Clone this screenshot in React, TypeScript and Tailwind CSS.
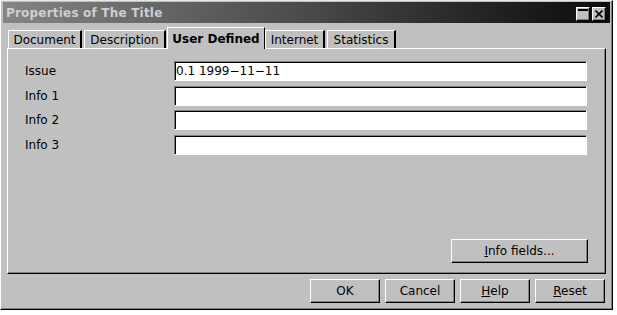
import React from "react";

const font = { fontFamily: '"DejaVu Sans", Verdana, sans-serif' };

const raised =
  "border border-t-white border-l-white border-r-black border-b-black shadow-[inset_-1px_-1px_0_#808080] bg-[#c0c0c0]";

function Tab({ label, w, active }: { label: string; w: number; active?: boolean }) {
  if (active) {
    return (
      <div
        className="relative z-10 -mb-px flex h-[22px] items-center justify-center border-t border-l border-r border-t-white border-l-white border-r-black bg-[#c0c0c0] text-[12px] font-bold text-black"
        style={{ width: w }}
      >
        {label}
      </div>
    );
  }
  return (
    <div
      className="flex h-[18px] items-center justify-center border-t border-l border-r-2 border-t-white border-l-white border-r-black bg-[#c0c0c0] text-[12px] text-black"
      style={{ width: w }}
    >
      {label}
    </div>
  );
}

function Field({ label, value }: { label: string; value?: string }) {
  return (
    <div className="flex h-[20px] items-center">
      <span className="w-[149px] text-[12px] text-black">{label}</span>
      <div className="flex h-[20px] w-[413px] items-center border border-t-[#808080] border-l-[#808080] border-r-white border-b-white bg-white pl-[1px] text-[12px] text-black shadow-[inset_1px_1px_0_#000]">
        {value}
      </div>
    </div>
  );
}

function Btn({ children, w = 70 }: { children: React.ReactNode; w?: number }) {
  return (
    <div
      className={`${raised} flex h-[24px] items-center justify-center text-[12px] text-black`}
      style={{ width: w }}
    >
      {children}
    </div>
  );
}

export default function App() {
  return (
    <div className="h-[315px] w-[617px] bg-white" style={font}>
      <div className="flex h-[310px] w-[613px] flex-col border border-t-[#e8e8e8] border-l-white border-r-black border-b-black bg-[#c0c0c0] shadow-[inset_-1px_-1px_0_#808080]">
        {/* title bar */}
        <div className="mx-[2px] mt-[1px] flex h-[21px] items-center justify-between bg-gradient-to-r from-[#858585] via-[#4a4a4a] to-[#0c0c0c] pl-[3px] pr-[4px]">
          <span className="text-[12px] font-bold tracking-[0.2px] text-[#cfcfcf]">Properties of The Title</span>
          <div className="mt-[3px] flex gap-[2px]">
            <div className={`${raised} flex h-[14px] w-[14px] items-start justify-start p-[1px]`}>
              <div className="h-[2px] w-[10px] bg-black" />
            </div>
            <div className={`${raised} flex h-[14px] w-[14px] items-center justify-center`}>
              <svg width="8" height="8" viewBox="0 0 8 8">
                <path d="M0.5 0.5L7.5 7.5M7.5 0.5L0.5 7.5" stroke="#000" strokeWidth="1.6" />
              </svg>
            </div>
          </div>
        </div>

        {/* tabs */}
        <div className="ml-[7px] mt-[4px] flex h-[21px] items-end gap-[2px]">
          <Tab label="Document" w={74} />
          <Tab label="Description" w={82} />
          <div className="-ml-[1px] -mr-[2px]">
            <Tab label="User Defined" w={98} active />
          </div>
          <Tab label="Internet" w={60} />
          <Tab label="Statistics" w={69} />
        </div>

        {/* panel */}
        <div className="ml-[6px] flex h-[226px] w-[599px] flex-col border border-t-white border-l-white border-r-black border-b-black pb-[10px] pl-[17px] pt-[12px] shadow-[inset_-1px_-1px_0_#808080]">
          <div className="flex flex-col gap-[4.5px]">
            <Field label="Issue" value="0.1 1999−11−11" />
            <Field label="Info 1" />
            <Field label="Info 2" />
            <Field label="Info 3" />
          </div>
          <div className="mt-auto flex justify-end pr-[17px]">
            <Btn w={137}>
              <span>
                <u>I</u>nfo fields...
              </span>
            </Btn>
          </div>
        </div>

        {/* buttons */}
        <div className="mt-[5px] flex justify-end gap-[5px] pr-[7px]">
          <Btn>OK</Btn>
          <Btn>Cancel</Btn>
          <Btn>
            <span>
              <u>H</u>elp
            </span>
          </Btn>
          <Btn>
            <span>
              <u>R</u>eset
            </span>
          </Btn>
        </div>
      </div>
    </div>
  );
}
